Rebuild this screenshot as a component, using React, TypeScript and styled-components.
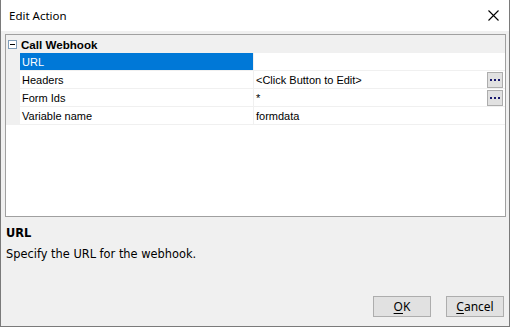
import React from 'react';
import styled, { createGlobalStyle } from 'styled-components';

const GlobalStyle = createGlobalStyle`
	html, body {
		margin: 0;
		padding: 0;
		background: #f0f0f0;
	}
	* {
		box-sizing: border-box;
	}
`;

const ui = '"Noto Sans", "Open Sans", sans-serif';
const grid = '"Liberation Sans", Arial, sans-serif';
const tahoma = '"DejaVu Sans", Verdana, sans-serif';

const Window = styled.div`
	width: 510px;
	height: 327px;
	display: flex;
	flex-direction: column;
	background: #f0f0f0;
	border: 1px solid #7a7a7a;
	border-top: none;
`;

const TitleBar = styled.div`
	height: 31px;
	flex: none;
	display: flex;
	align-items: center;
	justify-content: space-between;
	background: #ffffff;
	padding: 0 10px 0 8px;
	font-family: ${ui};
	font-size: 11.5px;
	color: #000;
`;

const Body = styled.div`
	flex: 1;
	display: flex;
	flex-direction: column;
	padding: 3px 3px 9px 4px;
`;

const Grid = styled.div`
	height: 183px;
	flex: none;
	border: 1px solid #a0a0a0;
	background: #ffffff;
	display: flex;
	flex-direction: column;
	font-family: ${grid};
	font-size: 11px;
	color: #000;
`;

const Category = styled.div`
	height: 18px;
	display: flex;
	align-items: center;
	background: #f0f0f0;
	font-family: ${grid};
	font-weight: bold;
	font-size: 11.6px;
`;

const Toggle = styled.span`
	width: 9px;
	height: 9px;
	margin: 0 4px 0 2px;
	border: 1px solid #7f9db9;
	background: #fff;
	position: relative;
	&::after {
		content: '';
		position: absolute;
		left: 1px;
		right: 1px;
		top: 3px;
		height: 1px;
		background: #000;
	}
`;

const Row = styled.div`
	height: 18px;
	display: flex;
	border-bottom: 1px solid #f0f0f0;
`;

const Gutter = styled.div`
	width: 14px;
	flex: none;
	background: #f0f0f0;
`;

const Label = styled.div<{ $selected?: boolean }>`
	width: 234px;
	flex: none;
	display: flex;
	align-items: center;
	padding-left: 2px;
	border-right: 1px solid #f0f0f0;
	background: ${(p) => (p.$selected ? '#0078d7' : '#ffffff')};
	color: ${(p) => (p.$selected ? '#ffffff' : '#000000')};
`;

const Value = styled.div`
	flex: 1;
	display: flex;
	align-items: center;
	padding-left: 2px;
	margin-right: 2px;
`;

const ValueText = styled.span`
	flex: 1;
`;

const DotsButton = styled.span`
	width: 16px;
	height: 16px;
	flex: none;
	align-self: center;
	margin-top: 1px;
	background: #e1e1e1;
	border: 1px solid #adadad;
	display: flex;
	align-items: center;
	justify-content: center;
	gap: 2px;
	& > i {
		width: 2px;
		height: 2px;
		background: #1a1a6e;
	}
`;

const Help = styled.div`
	padding: 9px 0 0 1px;
	font-family: ${tahoma};
	font-size: 11.4px;
	color: #000;
	flex: 1;
`;

const HelpTitle = styled.div`
	font-weight: bold;
	height: 14px;
`;

const HelpText = styled.div`
	margin-top: 7px;
`;

const Buttons = styled.div`
	display: flex;
	justify-content: flex-end;
	gap: 15px;
	padding-right: 2px;
`;

const Button = styled.button`
	width: 58px;
	height: 21px;
	background: #e1e1e1;
	border: 1px solid #adadad;
	font-family: ${ui};
	font-size: 12px;
	color: #000;
	padding: 0;
	& u {
		text-underline-offset: 2px;
	}
`;

const Dots = () => (
	<DotsButton>
		<i />
		<i />
		<i />
	</DotsButton>
);

const rows = [
	{ label: 'URL', value: '', selected: true, button: false },
	{ label: 'Headers', value: '<Click Button to Edit>', selected: false, button: true },
	{ label: 'Form Ids', value: '*', selected: false, button: true },
	{ label: 'Variable name', value: 'formdata', selected: false, button: false },
];

export default function App() {
	return (
		<>
			<GlobalStyle />
			<Window>
				<TitleBar>
					<span>Edit Action</span>
					<svg width='11' height='11' viewBox='0 0 11 11'>
						<path d='M0.5 0.5 L10.5 10.5 M10.5 0.5 L0.5 10.5' stroke='#000' strokeWidth='1.1' />
					</svg>
				</TitleBar>
				<Body>
					<Grid>
						<Category>
							<Toggle />
							Call Webhook
						</Category>
						{rows.map((r) => (
							<Row key={r.label}>
								<Gutter />
								<Label $selected={r.selected}>{r.label}</Label>
								<Value>
									<ValueText>{r.value}</ValueText>
									{r.button && <Dots />}
								</Value>
							</Row>
						))}
					</Grid>
					<Help>
						<HelpTitle>URL</HelpTitle>
						<HelpText>Specify the URL for the webhook.</HelpText>
					</Help>
					<Buttons>
						<Button>
							<u>O</u>K
						</Button>
						<Button>
							<u>C</u>ancel
						</Button>
					</Buttons>
				</Body>
			</Window>
		</>
	);
}
